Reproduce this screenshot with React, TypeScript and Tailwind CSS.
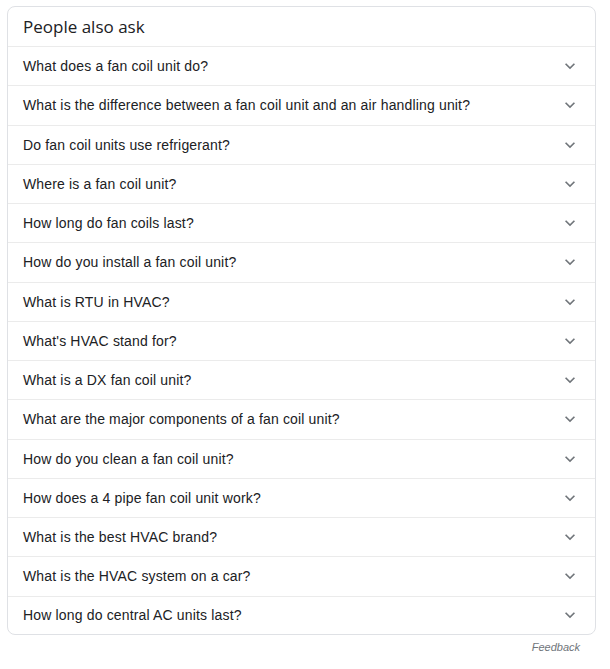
import React from "react";

const questions = [
  "What does a fan coil unit do?",
  "What is the difference between a fan coil unit and an air handling unit?",
  "Do fan coil units use refrigerant?",
  "Where is a fan coil unit?",
  "How long do fan coils last?",
  "How do you install a fan coil unit?",
  "What is RTU in HVAC?",
  "What's HVAC stand for?",
  "What is a DX fan coil unit?",
  "What are the major components of a fan coil unit?",
  "How do you clean a fan coil unit?",
  "How does a 4 pipe fan coil unit work?",
  "What is the best HVAC brand?",
  "What is the HVAC system on a car?",
  "How long do central AC units last?",
];

function Chevron() {
  return (
    <svg width="20" height="20" viewBox="0 0 24 24" className="shrink-0">
      <path d="M16.59 8.59L12 13.17 7.41 8.59 6 10l6 6 6-6z" fill="#70757a" />
    </svg>
  );
}

export default function App() {
  return (
    <div className="min-h-[669px] w-[610px] bg-white pt-[6px] pl-[7px]" style={{ fontFamily: "Arial, 'Liberation Sans', sans-serif" }}>
      <div className="w-[589px] rounded-lg border border-[#dfe1e5] bg-white">
        <div className="flex h-[39px] items-center px-[15px]">
          <span className="text-[17px] leading-[22px] text-[#202124]" style={{ fontFamily: "'Open Sans', Roboto, sans-serif" }}>
            People also ask
          </span>
        </div>
        {questions.map((q, i) => (
          <div
            key={i}
            className={`flex items-center justify-between border-t border-[#ebebeb] pl-[15px] pr-[15px] ${i === questions.length - 1 ? "h-[38px]" : "h-[39.25px]"}`}
          >
            <span className="text-[14px] leading-[20px] tracking-[0.16px] text-[#202124]">{q}</span>
            <Chevron />
          </div>
        ))}
      </div>
      <div className="flex w-[589px] justify-end pr-[16px] pt-[4px]">
        <span className="text-[11px] leading-[16px] italic text-[#70757a]">Feedback</span>
      </div>
    </div>
  );
}
